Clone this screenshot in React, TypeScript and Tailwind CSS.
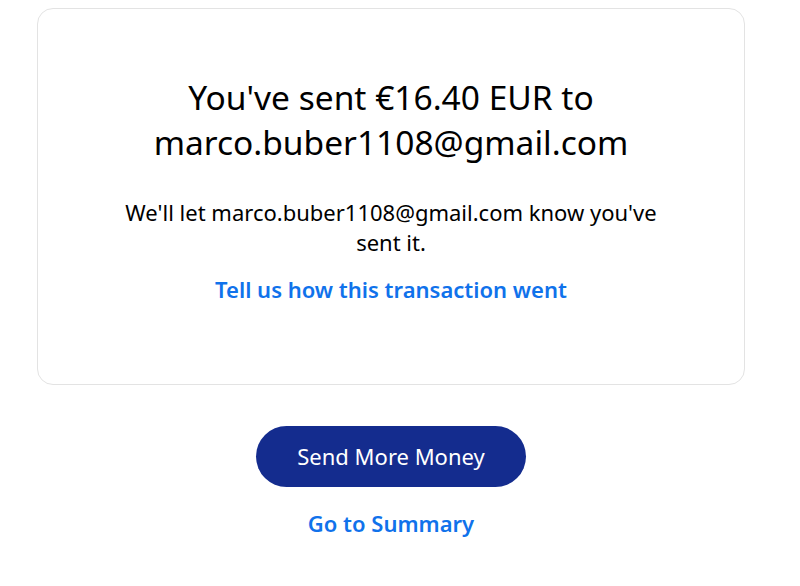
import React from "react";

function App() {
    return (
        <div className="min-h-[586px] w-[800px] bg-white font-['Noto_Sans',sans-serif] text-black">
            <div className="pl-[37px] pr-[55px] pt-[8px]">
                {/* Confirmation card */}
                <div className="flex h-[377px] flex-col items-center rounded-[16px] border border-[#e3e3e3] px-6 pt-[66px] text-center">
                    <h1 className="text-[33.5px] leading-[45px] font-normal">
                        You've sent €16.40 EUR to
                        <br />
                        marco.buber1108@gmail.com
                    </h1>
                    <p className="mt-[32px] text-[22px] leading-[30px]">
                        We'll let marco.buber1108@gmail.com know you've
                        <br />
                        sent it.
                    </p>
                    <a href="#_" className="mt-[18px] text-[22px] leading-[29px] font-semibold text-[#1072eb]">
                        Tell us how this transaction went
                    </a>
                </div>
            </div>
            {/* Actions */}
            <div className="flex flex-col items-center pr-[18px] pt-[41px]">
                <button className="h-[61px] w-[270px] rounded-full bg-[#142c8e] text-[22px] text-white">
                    Send More Money
                </button>
                <a href="#_" className="mt-[22px] text-[22px] leading-[29px] font-semibold text-[#1072eb]">
                    Go to Summary
                </a>
            </div>
        </div>
    );
}

export default App;
